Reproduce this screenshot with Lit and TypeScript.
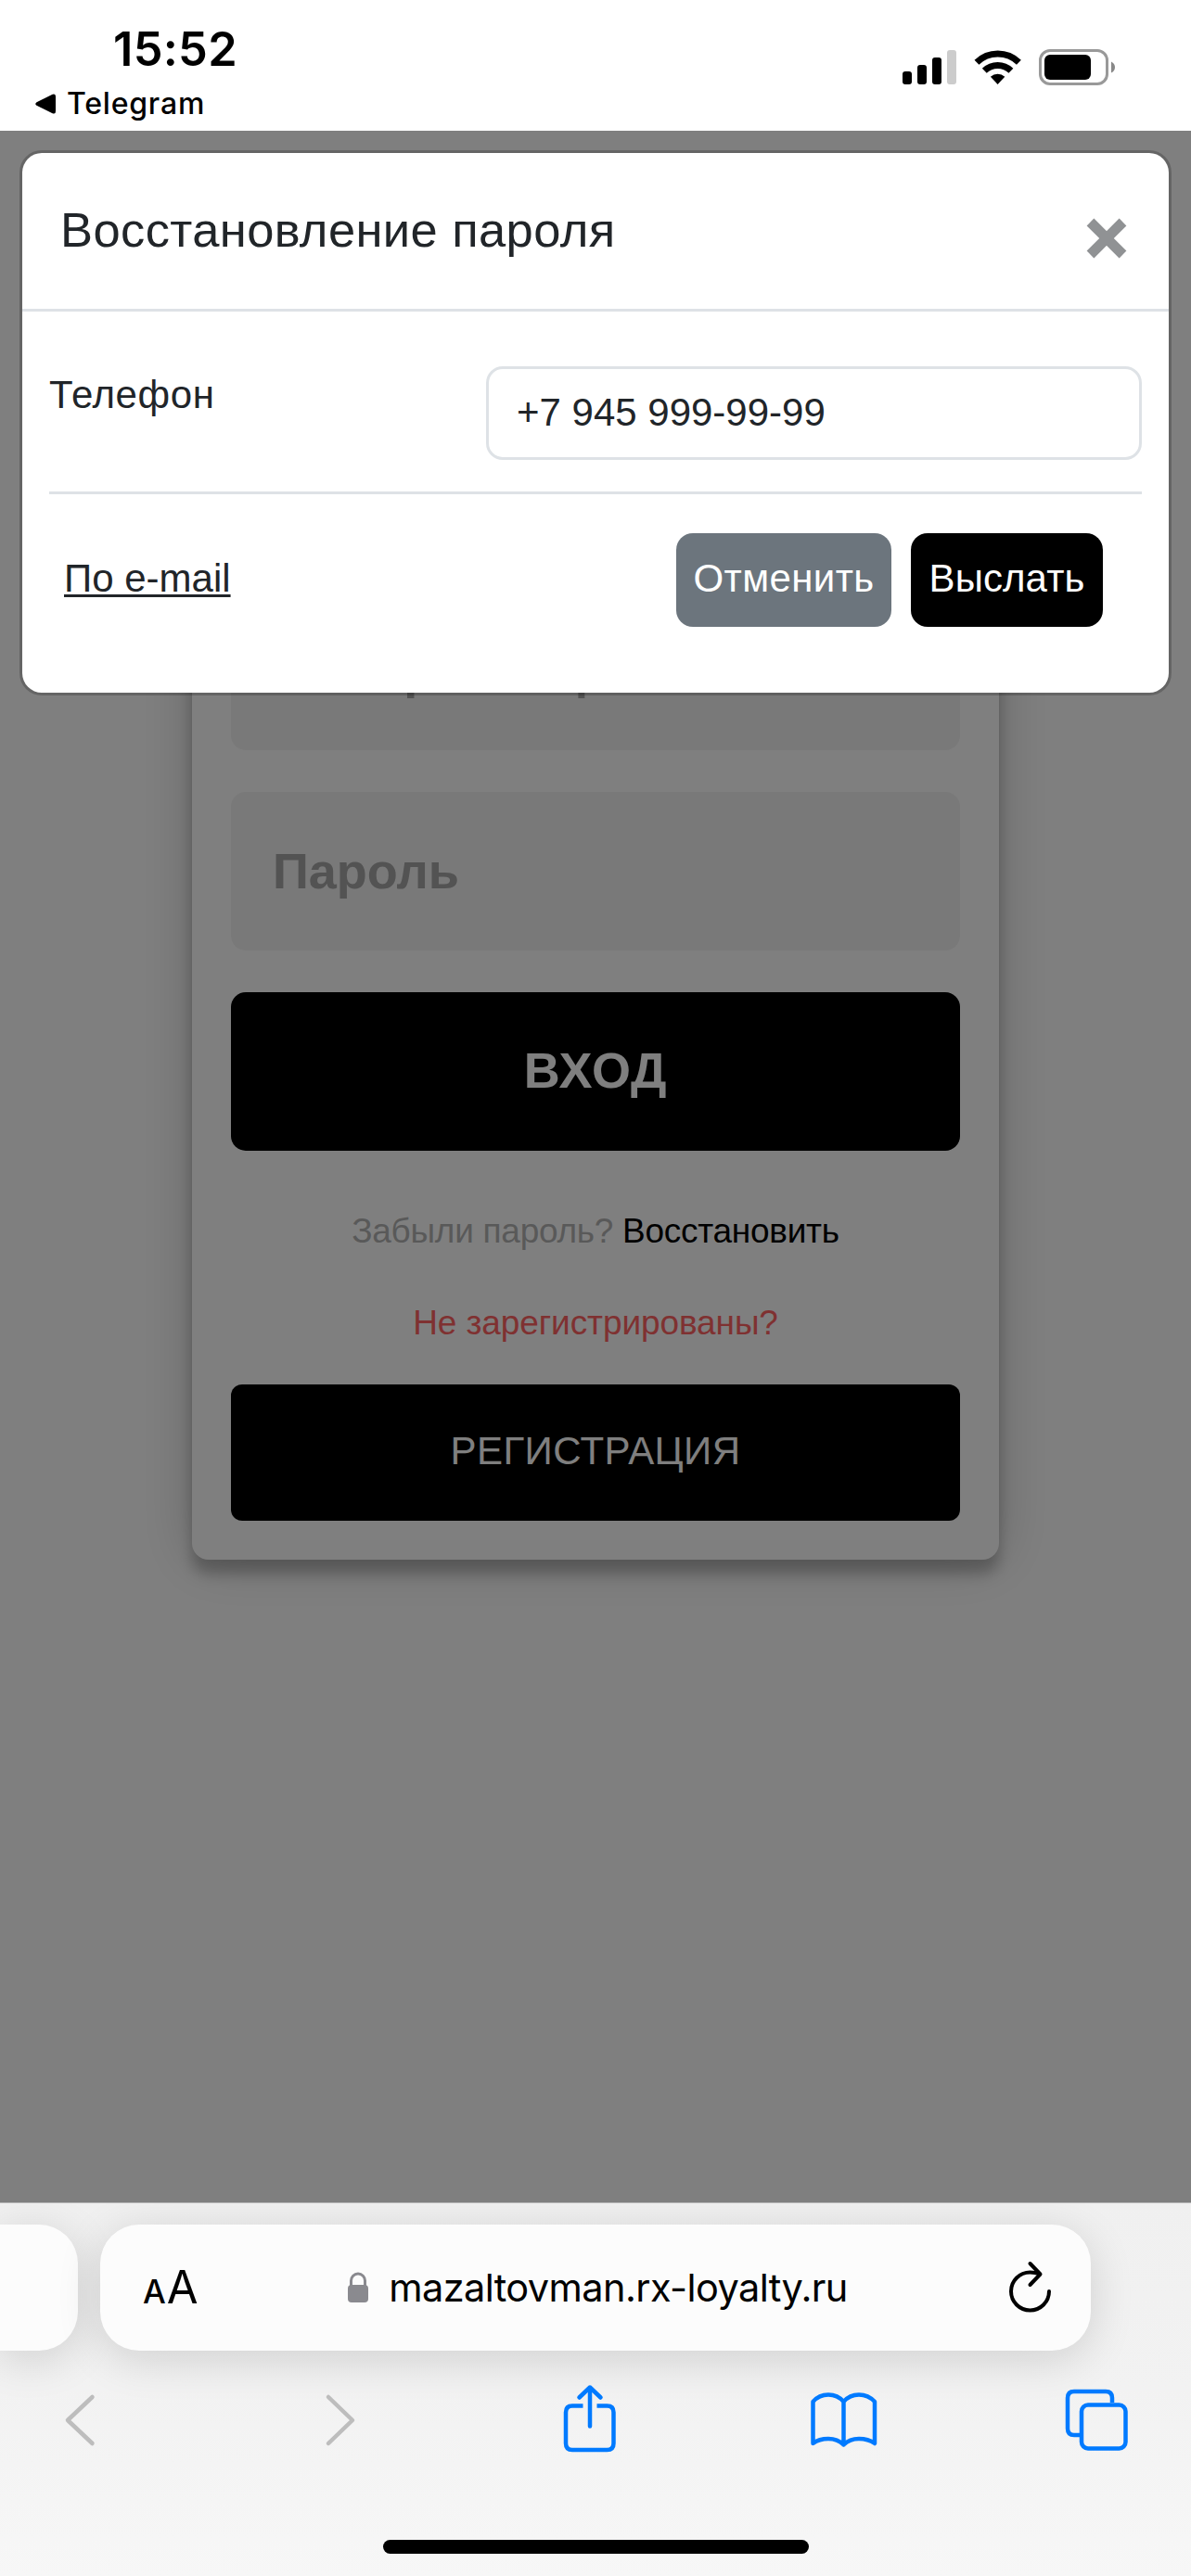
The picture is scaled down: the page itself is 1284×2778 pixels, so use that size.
import { LitElement, html, css, svg } from "lit";
import { customElement, property } from "lit/decorators.js";

@customElement("status-bar")
export class StatusBar extends LitElement {
  static styles = css`
    :host {
      display: flex;
      justify-content: space-between;
      box-sizing: border-box;
      height: 141px;
      background: #fff;
      color: #000;
      font-family: Inter, sans-serif;
    }

    .left {
      display: flex;
      flex-direction: column;
      padding: 23px 0 0 38px;
    }

    .time {
      padding-left: 84px;
      font-size: 50.5px;
      font-weight: 600;
      letter-spacing: 0.3px;
      line-height: 60px;
    }

    .back {
      display: flex;
      align-items: center;
      gap: 12px;
      margin-top: 9px;
      font-size: 32px;
      font-weight: 500;
      letter-spacing: 0.8px;
      line-height: 40px;
    }

    .icons {
      margin: 50px 78px 0 0;
    }
  `;

  @property() time = "";
  @property() app = "";

  render() {
    return html`
      <div class="left">
        <div class="time">${this.time}</div>
        <div class="back">
          <svg width="22" height="24" viewBox="0 0 22 24">
            <path
              d="M1.5 10.2L18.6 1.8Q22 .5 22 4V20Q22 23.5 18.6 22.2L1.5 13.8Q-1 12 1.5 10.2Z"
            />
          </svg>
          <span class="app">${this.app}</span>
        </div>
      </div>
      <svg class="icons" width="234" height="46" viewBox="972 50 234 46">
        <rect x="973" y="77" width="10" height="14" rx="3" />
        <rect x="989" y="70" width="10" height="21" rx="3" />
        <rect x="1005" y="62" width="10" height="29" rx="3" />
        <rect x="1021" y="54" width="10" height="37" rx="3" fill="#ccc" />
        <g fill="none" stroke="#000" stroke-width="7">
          <path d="M1053 67.3A32.5 32.5 0 0 1 1098.4 67.3" />
          <path d="M1061.3 76.2A20.5 20.5 0 0 1 1089.9 76.2" />
        </g>
        <path d="M1067.9 82.8A11.5 11.5 0 0 1 1083.3 82.8L1075.6 91Z" />
        <rect
          x="1121.5"
          y="54.5"
          width="72"
          height="36"
          rx="10.5"
          fill="none"
          stroke="#999"
          stroke-width="3"
        />
        <rect x="1126" y="59" width="50" height="27" rx="6" />
        <path d="M1198 66.5Q1202 68.5 1202 72.5Q1202 76.5 1198 78.5Z" fill="#888" />
      </svg>
    `;
  }
}

@customElement("login-card")
export class LoginCard extends LitElement {
  static styles = css`
    :host {
      display: block;
      box-sizing: border-box;
      width: 870px;
      padding: 42px;
      border-radius: 18px;
      background: #fff;
      box-shadow: 0 0 60px 0 rgba(0, 0, 0, 0.2),
        0 15px 15px 0 rgba(0, 0, 0, 0.24);
      font-family: "Liberation Sans", Arial, sans-serif;
    }

    .form {
      display: flex;
      flex-direction: column;
      gap: 45px;
    }

    .field,
    .submit {
      box-sizing: border-box;
      width: 100%;
      height: 171px;
      margin: 0;
      border: 0;
      border-radius: 16px;
      font: bold 54px "Liberation Sans", Arial, sans-serif;
    }

    .field {
      padding: 0 45px 2px;
      background: #f2f2f2;
    }

    .field::placeholder {
      color: #a6a6a6;
      opacity: 1;
    }

    .submit {
      padding: 0 0 4px;
      background: #000;
      color: #fff;
      letter-spacing: 0.8px;
    }

    .message {
      margin: 59px 0 0;
      color: #b3b3b3;
      font-size: 37px;
      letter-spacing: -0.27px;
      line-height: 55px;
      text-align: center;
      white-space: nowrap;
    }

    .message a {
      color: #000;
      text-decoration: none;
    }

    .message.warn {
      margin-top: 44px;
      color: #ff6363;
      letter-spacing: -0.1px;
    }

    .register {
      display: block;
      box-sizing: border-box;
      width: 100%;
      height: 147px;
      margin-top: 39px;
      padding: 0 0 3px;
      border: 0;
      border-radius: 12px;
      background: #000;
      color: #fff;
      font: 42px "Liberation Sans", Arial, sans-serif;
      letter-spacing: 0.4px;
    }
  `;

  render() {
    return html`
      <div class="form">
        <input class="field" type="text" placeholder="Номер телефона" />
        <input class="field" type="password" placeholder="Пароль" />
        <button class="submit">ВХОД</button>
      </div>
      <p class="message">Забыли пароль? <a href="#">Восстановить</a></p>
      <p class="message warn">Не зарегистрированы?</p>
      <button class="register">РЕГИСТРАЦИЯ</button>
    `;
  }
}

@customElement("restore-modal")
export class RestoreModal extends LitElement {
  static styles = css`
    :host {
      display: block;
      box-sizing: border-box;
      border: 3px solid rgba(0, 0, 0, 0.2);
      border-radius: 24px;
      background: #fff;
      background-clip: padding-box;
      color: #212529;
      font-family: "Liberation Sans", Arial, sans-serif;
      font-size: 42px;
    }

    .header {
      display: flex;
      align-items: center;
      justify-content: space-between;
      height: 168px;
      padding: 0 45px 0 41px;
      border-bottom: 3px solid #dee2e6;
    }

    .title {
      margin-bottom: 3px;
      font-size: 52.5px;
      letter-spacing: 0.4px;
      white-space: nowrap;
    }

    .close {
      margin-top: 15px;
    }

    .body {
      padding: 59px 29px 71px;
    }

    .row {
      display: grid;
      grid-template-columns: 471px 1fr;
      align-items: start;
      padding-bottom: 34px;
      border-bottom: 3px solid #dee2e6;
    }

    .label {
      margin-top: -1px;
      letter-spacing: 0.6px;
      line-height: 63px;
    }

    .phone {
      box-sizing: border-box;
      width: 100%;
      height: 101px;
      margin: 0;
      padding: 0 30px 1px;
      border: 3px solid #dee2e6;
      border-radius: 18px;
      color: #212529;
      font: 42px "Liberation Sans", Arial, sans-serif;
    }

    .footer {
      display: flex;
      align-items: center;
      gap: 21px;
      margin-top: 42px;
      padding: 0 42px 0 16px;
    }

    .by-email {
      margin: 0 auto 3px 0;
      color: inherit;
      text-decoration-thickness: 3px;
      text-underline-offset: 3px;
      text-decoration-skip-ink: none;
    }

    .btn {
      height: 101px;
      padding: 0 0 3px;
      border: 0;
      border-radius: 18px;
      color: #fff;
      font: 42px "Liberation Sans", Arial, sans-serif;
    }

    .cancel {
      width: 232px;
      background: #6c757d;
      letter-spacing: 0.4px;
    }

    .send {
      width: 207px;
      background: #000;
      letter-spacing: 0.1px;
    }
  `;

  render() {
    return html`
      <div class="header">
        <span class="title">Восстановление пароля</span>
        <svg class="close" width="44" height="44" viewBox="0 0 44 44">
          <path d="M4.5 4.5L39.5 39.5M39.5 4.5L4.5 39.5" stroke="#909294" stroke-width="11" />
        </svg>
      </div>
      <div class="body">
        <div class="row">
          <label class="label">Телефон</label>
          <input class="phone" type="tel" .value=${"+7 945 999-99-99"} />
        </div>
        <div class="footer">
          <a class="by-email" href="#">По e-mail</a>
          <button class="btn cancel">Отменить</button>
          <button class="btn send">Выслать</button>
        </div>
      </div>
    `;
  }
}

const toolbarIcons = [
  {
    color: "#bdbdbd",
    shape: svg`<path d="M43.5 15L17 40L43.5 65" />`,
  },
  {
    color: "#bdbdbd",
    shape: svg`<path d="M24 15L50 40L24 65" />`,
  },
  {
    color: "#007aff",
    shape: svg`
      <path d="M24.5 24.5H13Q6 24.5 6 31.5V65Q6 72 13 72H50.5Q57.5 72 57.5 65V31.5Q57.5 24.5 50.5 24.5H39.5" stroke-linecap="butt" />
      <path d="M32 46.5V4.5M20.5 15.5L32 4.5L43.5 15.5" />`,
  },
  {
    color: "#007aff",
    shape: svg`
      <path d="M31.5 20Q25 12.5 15 12.5Q5 12.5 -1.5 20V65Q5 60 15 60Q25 60 31.5 66.5Q38 60 48 60Q58 60 65 65V20Q58 12.5 48 12.5Q38 12.5 31.5 20V66.5" />`,
  },
  {
    color: "#007aff",
    shape: svg`
      <path d="M47 21V16Q47 9 40 9H6Q-1 9 -1 16V49Q-1 56 6 56H13" stroke-linecap="butt" />
      <rect x="14" y="23.5" width="47.500" height="47" rx="7" />`,
  },
];

@customElement("browser-toolbar")
export class BrowserToolbar extends LitElement {
  static styles = css`
    :host {
      display: flex;
      flex-direction: column;
      box-sizing: border-box;
      height: 403px;
      border-top: 1px solid #b4b4b4;
      background: linear-gradient(#f0f0f0, #f2f2f2 50%, #f7f7f7);
      overflow: hidden;
    }

    .tabs {
      display: flex;
      gap: 24px;
      padding-top: 23px;
    }

    .tab {
      box-sizing: border-box;
      width: 1068px;
      height: 136px;
      border-radius: 42px;
      background: #fcfcfc;
      box-shadow: 0 9px 48px rgba(0, 0, 0, 0.14);
    }

    .tab.previous {
      width: 84px;
      border-radius: 0 42px 42px 0;
    }

    .tab.current {
      display: grid;
      grid-template-columns: 1fr auto 1fr;
      align-items: center;
      padding: 0 42px 0 46px;
      font-family: Inter, sans-serif;
    }

    .text-size {
      display: flex;
      align-items: baseline;
      gap: 1px;
      margin-top: 3px;
      font-size: 49px;
      line-height: 60px;
    }

    .text-size small {
      font-size: 35px;
      font-weight: 500;
    }

    .address {
      display: flex;
      align-items: center;
      gap: 21px;
      font-size: 41.5px;
      letter-spacing: -0.6px;
      line-height: 60px;
      white-space: nowrap;
    }

    .reload {
      justify-self: end;
      margin-bottom: 3px;
    }

    .actions {
      display: flex;
      justify-content: space-between;
      padding: 35px 72px 0 56px;
    }

    .action {
      overflow: visible;
      fill: none;
      stroke-width: 4.5px;
      stroke-linecap: round;
      stroke-linejoin: round;
    }

    .home {
      width: 459px;
      height: 15px;
      margin: 89px auto 0;
      border-radius: 8px;
      background: #000;
    }
  `;

  @property() url = "";

  render() {
    return html`
      <div class="tabs">
        <div class="tab previous"></div>
        <div class="tab current">
          <span class="text-size"><small>A</small>A</span>
          <span class="address">
            <svg width="24" height="34" viewBox="0 0 24 34">
              <rect x="1" y="14" width="22" height="19" rx="4" fill="#8a8a8f" />
              <path d="M4.5 15V9.5A7.5 7.5 0 0 1 19.5 9.5V15" fill="none" stroke="#8a8a8f" stroke-width="3" />
            </svg>
            <span>${this.url}</span>
          </span>
          <svg class="reload" width="46" height="58" viewBox="0 0 46 58" fill="none" stroke="#000" stroke-width="4" stroke-linecap="round" stroke-linejoin="round">
            <path d="M43 34A20.5 20.5 0 1 1 22.5 13.5Q28 13.5 33 15.5" />
            <path d="M22.5 4L33.5 15.5L22.5 27" />
          </svg>
        </div>
      </div>
      <div class="actions">
        ${toolbarIcons.map(
          (icon) => html`
            <svg class="action" width="60" height="80" viewBox="0 0 60 80" stroke=${icon.color}>
              ${icon.shape}
            </svg>
          `
        )}
      </div>
      <div class="home"></div>
    `;
  }
}

@customElement("app-root")
export class AppRoot extends LitElement {
  static styles = css`
    :host {
      display: flex;
      flex-direction: column;
      width: 1284px;
      height: 2778px;
      overflow: hidden;
    }

    .page {
      position: relative;
      flex: 1;
      background: #fff;
      overflow: hidden;
    }

    .card {
      margin: 455px auto 0;
    }

    /* Dims the login form while the dialog is open */
    .backdrop {
      position: absolute;
      inset: 0;
      padding: 21px;
      background: rgba(0, 0, 0, 0.5);
    }
  `;

  render() {
    return html`
      <status-bar time="15:52" app="Telegram"></status-bar>
      <div class="page">
        <login-card class="card"></login-card>
        <div class="backdrop">
          <restore-modal></restore-modal>
        </div>
      </div>
      <browser-toolbar url="mazaltovman.rx-loyalty.ru"></browser-toolbar>
    `;
  }
}
